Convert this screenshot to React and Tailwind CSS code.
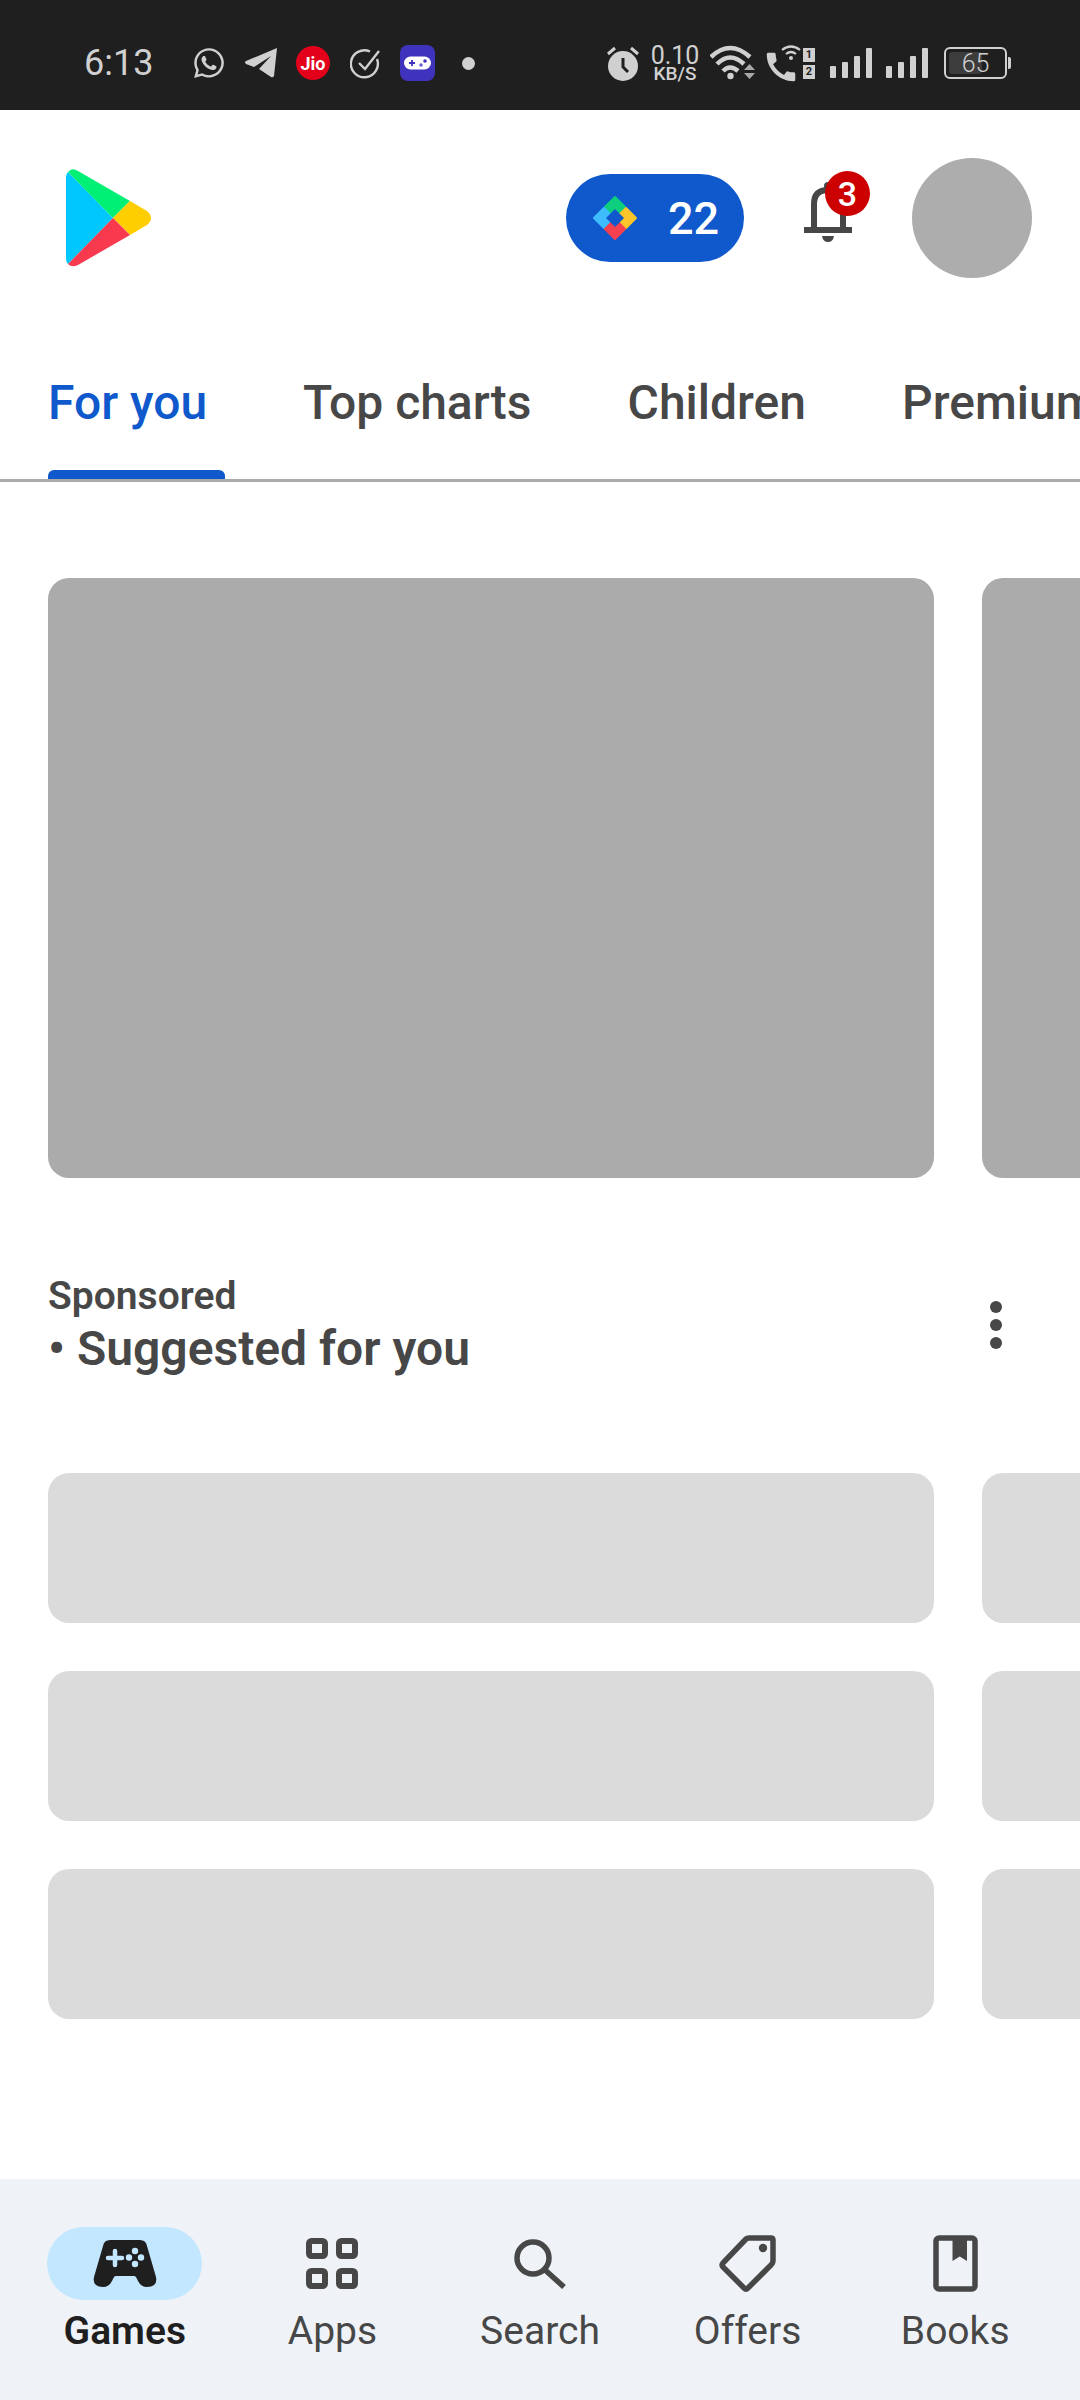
import React from 'react';
import { FaWhatsapp } from 'react-icons/fa';
import { MdCall } from 'react-icons/md';

const tabs = ['Top charts', 'Children', 'Premium'];

const PlayLogo = () => (
  <svg width="86" height="98" viewBox="0 0 86 98" className="ml-[66px] shrink-0">
    <path d="M2 3 L47 49 L2 95 Q0 93 0 90 V8 Q0 5 2 3Z" fill="#00c8ff" />
    <path d="M2 3 Q6 -2 12 2 L64 32 L47 49Z" fill="#00f076" />
    <path d="M64 32 L81 42 Q89 49 81 56 L64 66 L47 49Z" fill="#ffce00" />
    <path d="M2 95 L47 49 L64 66 L12 96 Q6 99 2 95Z" fill="#f93a4e" />
  </svg>
);

const Diamond = () => (
  <svg width="48" height="48" viewBox="0 0 48 48">
    <g strokeWidth="2" strokeLinejoin="round">
      <path d="M24 3 L34 13 L24 23 L14 13Z" fill="#0dcf7e" stroke="#0dcf7e" />
      <path d="M13 14 L23 24 L13 34 L3 24Z" fill="#3fbcff" stroke="#3fbcff" />
      <path d="M35 14 L45 24 L35 34 L25 24Z" fill="#fcc52a" stroke="#fcc52a" />
      <path d="M24 25 L34 35 L24 45 L14 35Z" fill="#f4404f" stroke="#f4404f" />
    </g>
    <path d="M24 15 L33 24 L24 33 L15 24Z" fill="#0f59cc" />
  </svg>
);

const Bell = () => (
  <svg width="48" height="60" viewBox="0 0 48 60" fill="none">
    <path d="M10 46 V22 Q10 8 24 8 Q39 8 39 22 V46" stroke="#474747" strokeWidth="6" />
    <rect x="20" y="0" width="8" height="10" rx="4" fill="#474747" />
    <rect x="0" y="45" width="48" height="6" fill="#474747" />
    <path d="M18 54 H30 Q29 60 24 60 Q19 60 18 54Z" fill="#474747" />
  </svg>
);

const GameIcon = () => (
  <svg width="64" height="47" viewBox="0 0 64 47">
    <path d="M17 0 H47 Q53 0 54 6 L63 37 Q65 47 54 47 Q48 47 45 41 L43 37 Q42 36 41 36 H23 Q22 36 21 37 L19 41 Q16 47 10 47 Q-1 47 1 37 L10 6 Q11 0 17 0Z" fill="#1f1f1f" />
    <path d="M15 18 H29 M22 11 V25" stroke="#c3e7ff" strokeWidth="4.5" strokeLinecap="round" />
    <circle cx="42" cy="11" r="3.2" fill="#c3e7ff" />
    <circle cx="42" cy="24" r="3.2" fill="#c3e7ff" />
    <circle cx="36" cy="17.5" r="3.2" fill="#c3e7ff" />
    <circle cx="48" cy="17.5" r="3.2" fill="#c3e7ff" />
  </svg>
);

const AppsIcon = () => (
  <svg width="52" height="51" viewBox="0 0 52 51" fill="none" stroke="#474747" strokeWidth="6">
    <rect x="3" y="3" width="16" height="15" rx="2.5" />
    <rect x="33" y="3" width="16" height="15" rx="2.5" />
    <rect x="3" y="33" width="16" height="15" rx="2.5" />
    <rect x="33" y="33" width="16" height="15" rx="2.5" />
  </svg>
);

const SearchIcon = () => (
  <svg width="52" height="50" viewBox="0 0 52 50" fill="none" stroke="#474747" strokeWidth="5.5">
    <circle cx="19" cy="19" r="16" />
    <path d="M30 30 L50 48" />
  </svg>
);

const OffersIcon = () => (
  <svg width="57" height="57" viewBox="0 0 57 57" fill="none">
    <path d="M30 3 H52 Q54 3 54 5 V26 Q54 28 52 30 L29 53 Q27 55 25 53 L4 32 Q2 30 4 28 L27 4 Q28 3 30 3Z" stroke="#474747" strokeWidth="5.5" strokeLinejoin="round" />
    <circle cx="44" cy="13" r="4.2" fill="#474747" />
  </svg>
);

const BooksIcon = () => (
  <svg width="45" height="57" viewBox="0 0 45 57" fill="none">
    <rect x="3" y="3" width="39" height="51" rx="3" stroke="#474747" strokeWidth="5.5" />
    <path d="M19.5 3 H34 V26 L26.7 21.5 L19.5 26Z" fill="#474747" />
  </svg>
);

const TelegramIcon = () => (
  <svg width="33" height="30" viewBox="0 0 33 30" className="ml-[19px]">
    <path d="M32 0 L29 28 Q28 30 26 29 L14 21 L26 8 L9 19 L1 16 Q-1 14 1 13Z" fill="#d0d0d0" />
  </svg>
);

const CheckIcon = () => (
  <svg width="31" height="31" viewBox="0 0 31 31" fill="none" stroke="#d0d0d0" strokeWidth="2.4" className="ml-[20px]">
    <path d="M27 11 A13.5 13.5 0 1 1 20 3.5" />
    <path d="M9 15 L15 21 L29 3" />
  </svg>
);

const GameBadge = () => (
  <div className="ml-[19px] flex h-[36px] w-[35px] items-center justify-center rounded-[8px] bg-[#3f33bd]">
    <svg width="27" height="14" viewBox="0 0 27 14">
      <rect width="27" height="13" y="0.5" rx="6.5" fill="#ffffff" />
      <path d="M5 7 H11 M8 4 V10" stroke="#3f33bd" strokeWidth="1.8" />
      <circle cx="17" cy="9" r="1.8" fill="#6a5fd8" />
      <circle cx="21" cy="5" r="1.8" fill="#3f33bd" />
    </svg>
  </div>
);

const AlarmIcon = () => (
  <svg width="32" height="35" viewBox="0 0 32 35">
    <circle cx="16" cy="20" r="15" fill="#d0d0d0" />
    <path d="M16 12 V21 L21 26" stroke="#1f1f1f" strokeWidth="3" fill="none" />
    <path d="M1 8 L8 2 M31 8 L24 2" stroke="#d0d0d0" strokeWidth="3" />
  </svg>
);

const WifiIcon = () => (
  <svg width="45" height="36" viewBox="0 0 45 36" fill="none" className="ml-[12px]">
    <path d="M1 12 Q20 -6 40 12" stroke="#d0d0d0" strokeWidth="4.5" />
    <path d="M7 19 Q20 6 34 19" stroke="#d0d0d0" strokeWidth="4.5" />
    <path d="M13 26 Q20 19 28 26" stroke="#d0d0d0" strokeWidth="4.5" />
    <circle cx="20.5" cy="31" r="3.2" fill="#d0d0d0" />
    <path d="M34 25 L39.5 19 L45 25Z M34 28 L39.5 34 L45 28Z" fill="#a8a8a8" />
  </svg>
);

const CallWifi = () => (
  <div className="relative ml-[11px] h-[36px] w-[35px]">
    <MdCall className="absolute left-[-4px] top-[3px] text-[#d0d0d0]" size={38} />
    <svg width="20" height="16" viewBox="0 0 20 16" fill="none" className="absolute right-0 top-0">
      <path d="M1 5 Q10 -2 19 5 M5 9 Q10 5 15 9" stroke="#d0d0d0" strokeWidth="2.2" />
      <circle cx="10" cy="13" r="2" fill="#d0d0d0" />
    </svg>
  </div>
);

const SimTags = () => (
  <div className="ml-[2px] flex h-[31px] w-[12px] flex-col justify-between font-['Roboto',sans-serif] text-[11px] leading-[14px] font-bold text-[#1f1f1f]">
    <span className="block h-[14px] bg-[#d0d0d0] text-center">1</span>
    <span className="block h-[14px] bg-[#d0d0d0] text-center">2</span>
  </div>
);

const Signal = ({ className }) => (
  <div className={`flex h-[30px] items-end gap-[6px] ${className}`}>
    <div className="h-[12px] w-[6px] rounded-[1px] bg-[#d0d0d0]" />
    <div className="h-[16px] w-[6px] rounded-[1px] bg-[#d0d0d0]" />
    <div className="h-[22px] w-[6px] rounded-[1px] bg-[#d0d0d0]" />
    <div className="h-[30px] w-[6px] rounded-[1px] bg-[#d0d0d0]" />
  </div>
);

const StatusBar = () => (
  <div className="flex h-[110px] shrink-0 items-center bg-[#1f1f1f] pt-[16px] text-[#d0d0d0]">
    <span className="ml-[84px] w-[62px] font-['Roboto',sans-serif] text-[36px] leading-none font-normal">6:13</span>
    <FaWhatsapp className="ml-[46px] text-[#d0d0d0]" size={34} />
    <TelegramIcon />
    <div className="ml-[18px] flex h-[34px] w-[34px] items-center justify-center rounded-full bg-[#e2001a] font-['Roboto',sans-serif] text-[18px] font-bold text-white">Jio</div>
    <CheckIcon />
    <GameBadge />
    <div className="ml-[27px] h-[13px] w-[13px] rounded-full bg-[#d0d0d0]" />
    <div className="ml-[132px]">
      <AlarmIcon />
    </div>
    <div className="ml-[13px] flex w-[46px] flex-col items-center font-['Roboto',sans-serif]">
      <span className="block text-[25px] leading-[21px]">0.10</span>
      <span className="block text-[19px] leading-[16px] font-medium">KB/S</span>
    </div>
    <WifiIcon />
    <CallWifi />
    <SimTags />
    <Signal className="ml-[15px]" />
    <Signal className="ml-[14px]" />
    <div className="ml-[16px] flex h-[32px] w-[63px] items-center rounded-[6px] border-2 border-[#d0d0d0] p-[3px]">
      <div className="relative flex h-full w-full items-center justify-center rounded-[3px]">
        <div className="absolute inset-y-0 left-0 w-[62%] rounded-[3px] bg-[#3c3c3c]" />
        <span className="relative font-['Roboto',sans-serif] text-[25px] leading-none font-light">65</span>
      </div>
    </div>
    <div className="ml-[1px] h-[12px] w-[3px] rounded-r-[2px] bg-[#d0d0d0]" />
  </div>
);

const TopBar = () => (
  <div className="flex h-[216px] shrink-0 items-center">
    <PlayLogo />
    <div className="ml-[414px] flex h-[88px] w-[178px] shrink-0 items-center rounded-full bg-[#0f59cc] pl-[25px]">
      <Diamond />
      <span className="ml-[29px] font-['Roboto',sans-serif] text-[45px] leading-none font-medium text-white">22</span>
    </div>
    <div className="relative mb-[12px] ml-[60px] shrink-0">
      <Bell />
      <div className="absolute left-[21px] top-[-11px] flex h-[45px] w-[45px] items-center justify-center rounded-full bg-[#cc0000] font-['Roboto',sans-serif] text-[34px] leading-none font-medium text-white">3</div>
    </div>
    <div className="ml-[60px] h-[120px] w-[120px] shrink-0 rounded-full bg-[#adadad]" />
  </div>
);

const Tabs = () => (
  <div className="flex h-[156px] shrink-0 overflow-hidden border-b-[3px] border-[#ababab] font-['Roboto',sans-serif] text-[48px] leading-none font-medium text-[#474747]">
    <div className="ml-[48px] flex w-[177px] shrink-0 flex-col">
      <span className="mt-[53px] text-[#0f59cc]">For you</span>
      <div className="mt-auto h-[9px] rounded-t-[6px] bg-[#0f59cc]" />
    </div>
    {tabs.map((tab, i) => (
      <span key={tab} className={i === 0 ? 'mt-[53px] ml-[78px] shrink-0' : 'mt-[53px] ml-[96px] shrink-0'}>{tab}</span>
    ))}
  </div>
);

const Carousel = ({ height, color, className }) => (
  <div className={`flex shrink-0 gap-[48px] overflow-hidden pl-[48px] ${className}`}>
    <div className={`w-[886px] shrink-0 rounded-[21px] ${height} ${color}`} />
    <div className={`w-[886px] shrink-0 rounded-[21px] ${height} ${color}`} />
  </div>
);

const SectionHeader = () => (
  <div className="mt-[92px] flex shrink-0 items-center justify-between pl-[48px] pr-[78px] font-['Roboto',sans-serif] font-semibold text-[#474747]">
    <div>
      <div className="text-[39px] leading-[52px]">Sponsored</div>
      <div className="mt-[1px] text-[48px] leading-[51px]">• Suggested for you</div>
    </div>
    <div className="mt-[6px] flex flex-col gap-[6px]">
      <div className="h-[12px] w-[12px] rounded-full bg-[#474747]" />
      <div className="h-[12px] w-[12px] rounded-full bg-[#474747]" />
      <div className="h-[12px] w-[12px] rounded-full bg-[#474747]" />
    </div>
  </div>
);

const navItems = [
  { label: 'Apps', icon: <AppsIcon /> },
  { label: 'Search', icon: <SearchIcon /> },
  { label: 'Offers', icon: <OffersIcon /> },
  { label: 'Books', icon: <BooksIcon /> },
];

const BottomNav = () => (
  <div className="mt-auto flex h-[221px] shrink-0 bg-[#eff3f8] px-[21px] pt-[48px] font-['Roboto',sans-serif] text-[39px] leading-[50px] text-[#474747]">
    <div className="flex flex-1 flex-col items-center">
      <div className="flex h-[73px] w-[155px] items-center justify-center rounded-full bg-[#c3e7ff]">
        <GameIcon />
      </div>
      <span className="mt-[6px] font-semibold text-[#1f1f1f]">Games</span>
    </div>
    {navItems.map((item) => (
      <div key={item.label} className="flex flex-1 flex-col items-center">
        <div className="flex h-[73px] items-center justify-center">{item.icon}</div>
        <span className="mt-[6px]">{item.label}</span>
      </div>
    ))}
  </div>
);

export default function App() {
  return (
    <div className="flex h-[2400px] w-[1080px] flex-col overflow-hidden bg-white">
      <StatusBar />
      <TopBar />
      <Tabs />
      <Carousel height="h-[600px]" color="bg-[#ababab]" className="mt-[96px]" />
      <SectionHeader />
      <Carousel height="h-[150px]" color="bg-[#dbdbdb]" className="mt-[99px]" />
      <Carousel height="h-[150px]" color="bg-[#dbdbdb]" className="mt-[48px]" />
      <Carousel height="h-[150px]" color="bg-[#dbdbdb]" className="mt-[48px]" />
      <BottomNav />
    </div>
  );
}
